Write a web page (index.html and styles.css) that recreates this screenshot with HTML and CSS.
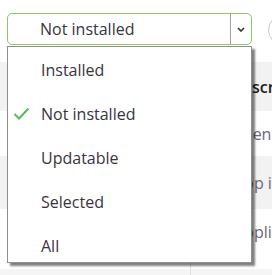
FILE: index.html
```html
<!DOCTYPE html>
<html lang="en">
<head>
    <meta charset="UTF-8">
    <meta name="viewport" content="width=device-width, initial-scale=1.0">
    <title>Packages</title>
    <link rel="stylesheet" href="styles.css">
</head>
<body>
    <!-- Filter toolbar -->
    <div class="toolbar">
        <div class="filter">
            <div class="select">
                <span class="select-value">Not installed</span>
                <span class="select-arrow">
                    <svg width="8" height="5" viewBox="0 0 8 5"><path d="M1 1 L4 4 L7 1" fill="none" stroke="#333" stroke-width="1.6"/></svg>
                </span>
            </div>
            <ul class="options">
                <li>Installed</li>
                <li class="checked">
                    <svg class="check" width="17" height="13" viewBox="0 0 17 13"><path d="M1.5 7 L6 11.5 L15.5 1.5" fill="none" stroke="#5cb85c" stroke-width="2"/></svg>
                    Not installed
                </li>
                <li>Updatable</li>
                <li>Selected</li>
                <li>All</li>
            </ul>
        </div>
        <div class="round-btn"></div>
    </div>

    <!-- Package table -->
    <table class="packages">
        <tr class="head">
            <td class="c-name"></td>
            <td class="c-ver"></td>
            <td class="c-desc">Description</td>
        </tr>
        <tr class="r1">
            <td class="c-name"></td>
            <td class="c-ver"></td>
            <td class="c-desc">Then-mode editor</td>
        </tr>
        <tr class="r2">
            <td class="c-name"></td>
            <td class="c-ver"></td>
            <td class="c-desc">App is used for</td>
        </tr>
        <tr class="r3">
            <td class="c-name"></td>
            <td class="c-ver"></td>
            <td class="c-desc">Application</td>
        </tr>
        <tr class="r4">
            <td class="c-name"></td>
            <td class="c-ver"></td>
            <td class="c-desc"></td>
        </tr>
    </table>
</body>
</html>
```

FILE: styles.css
```css
body {
    margin: 0;
    font-family: "Open Sans", "DejaVu Sans", sans-serif;
    font-size: 16px;
    color: #333;
    background: white;
    width: 272px;
    height: 275px;
    overflow: hidden;
}

.toolbar {
    display: flex;
    align-items: flex-start;
    gap: 16px;
    padding: 13px 0 0 7px;
    height: 62px;
    box-sizing: border-box;
}

.filter {
    position: relative;
    flex: none;
}

.select {
    display: flex;
    width: 245px;
    height: 32px;
    box-sizing: border-box;
    border: 1px solid #8cc863;
    border-radius: 5px;
}

.select-value {
    flex: 1;
    padding-left: 32px;
    line-height: 30px;
    color: #3a3340;
}

.select-arrow {
    width: 20px;
    border-left: 1px solid #a0a0a0;
    display: flex;
    align-items: center;
    justify-content: center;
}

.options {
    position: absolute;
    left: 0;
    top: 33px;
    z-index: 2;
    margin: 0;
    padding: 1px 0 0;
    list-style: none;
    width: 245px;
    height: 217px;
    box-sizing: border-box;
    overflow: hidden;
    background: white;
    border: 1px solid #8e8e8e;
    box-shadow: 3px 3px 2px rgba(0, 0, 0, 0.5);
}

.options li {
    position: relative;
    height: 44px;
    line-height: 44px;
    padding-left: 33px;
    color: #3a3340;
}

.check {
    position: absolute;
    left: 5px;
    top: 15px;
}

.round-btn {
    width: 28px;
    height: 28px;
    flex: none;
    border: 1px solid #c8c8c8;
    border-radius: 50%;
    margin-top: 2px;
}

.packages {
    border-collapse: collapse;
    table-layout: fixed;
    width: 272px;
}

.packages td {
    padding: 0;
    white-space: nowrap;
    overflow: hidden;
}

.c-name {
    width: 190px;
}

.c-ver {
    width: 43px;
    border-left: 1px solid #e0e0e0;
}

.c-desc {
    color: #6e6878;
}

.head {
    height: 49px;
    background: #f2f2f2;
}

.head .c-desc {
    color: #222;
    font-weight: 600;
    text-indent: -3px;
}

.r1 {
    height: 45px;
}

.r2 {
    height: 53px;
    background: #f2f2f2;
}

.r3 {
    height: 60px;
}

.packages .r3 .c-desc {
    vertical-align: top;
    padding-top: 12px;
}

.r4 {
    height: 6px;
    background: #f5f5f5;
}
```
